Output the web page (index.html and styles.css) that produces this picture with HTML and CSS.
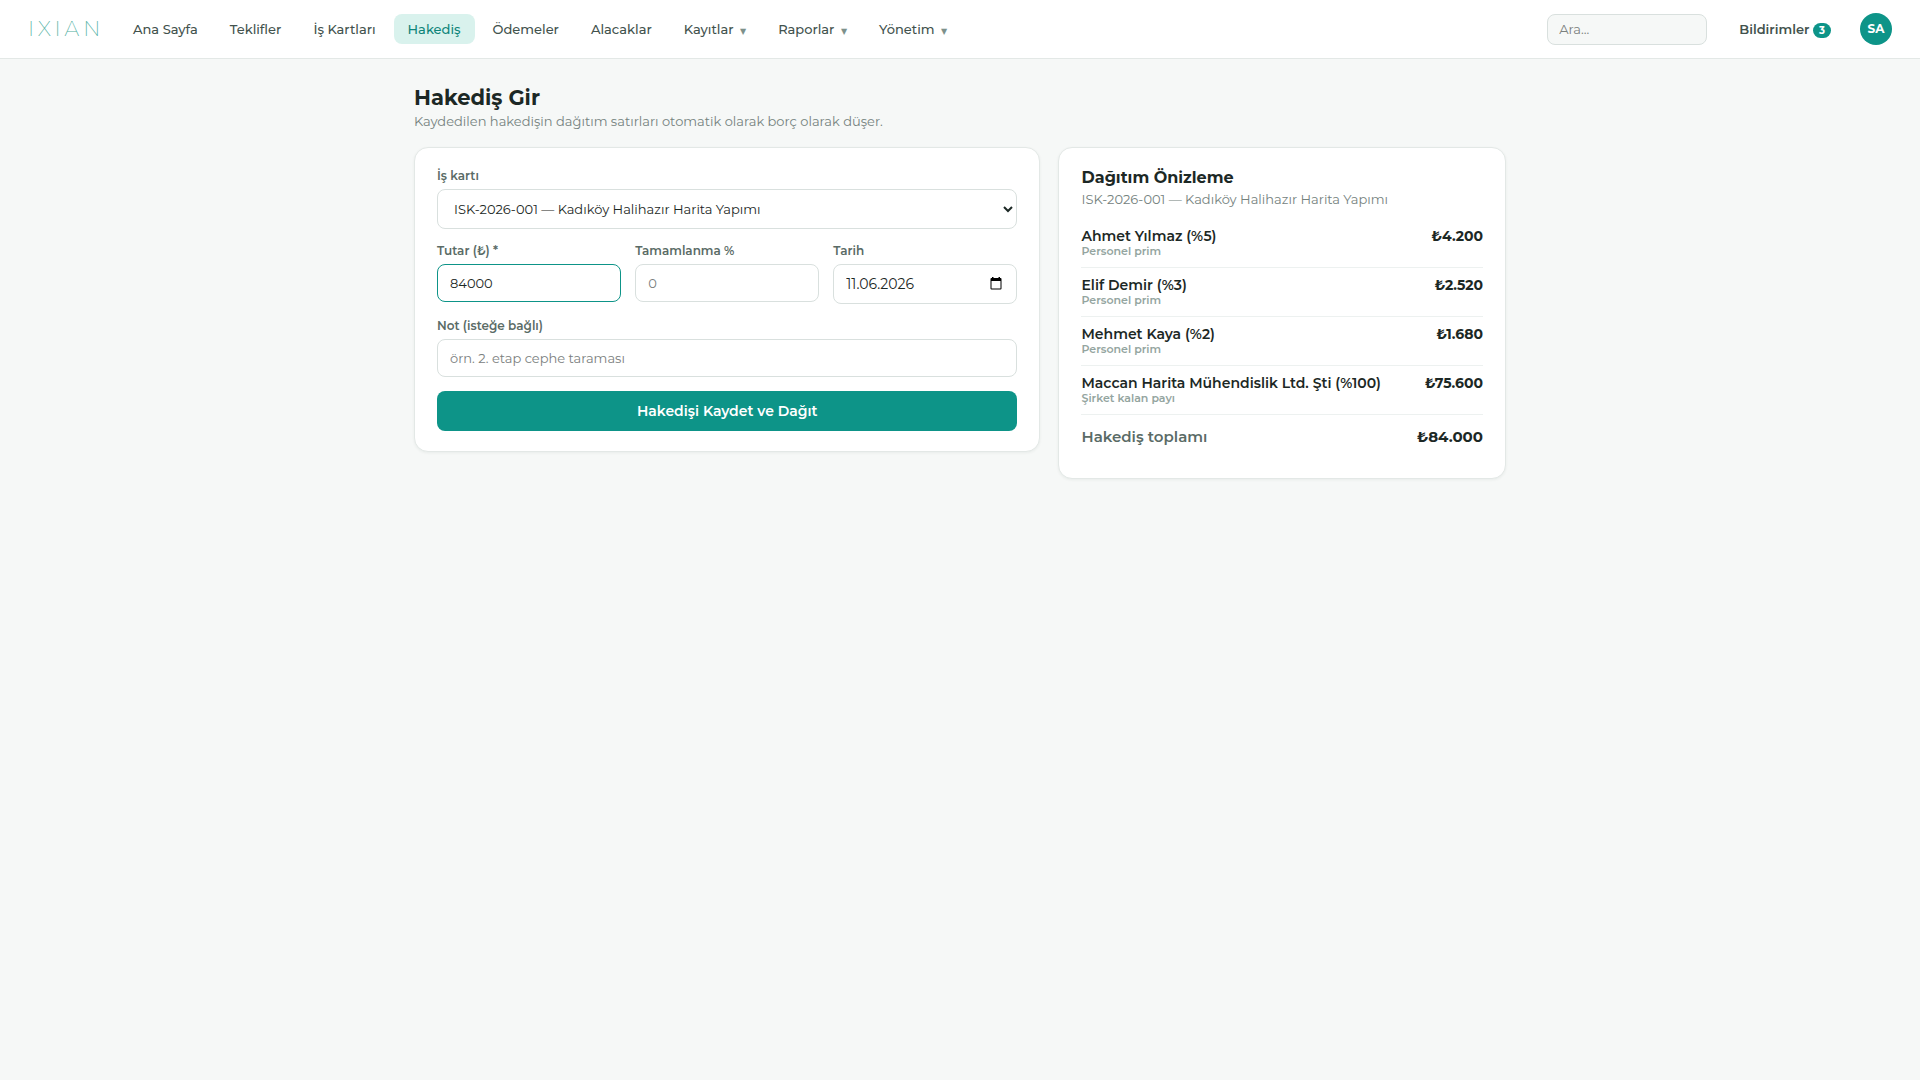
FILE: index.html
```html
<!DOCTYPE html>
<html lang="tr">
<head>
  <meta charset="UTF-8">
  <meta name="viewport" content="width=device-width, initial-scale=1.0">
  <title>Hakediş Gir</title>
  <link rel="stylesheet" href="styles.css">
</head>
<body>
  <header class="topbar">
    <a class="logo" href="#">IXIAN</a>
    <nav class="nav">
      <a href="#">Ana Sayfa</a>
      <a href="#">Teklifler</a>
      <a href="#">İş Kartları</a>
      <a href="#" class="active">Hakediş</a>
      <a href="#">Ödemeler</a>
      <a href="#">Alacaklar</a>
      <button type="button">Kayıtlar <span class="caret">▼</span></button>
      <button type="button">Raporlar <span class="caret">▼</span></button>
      <button type="button">Yönetim <span class="caret">▼</span></button>
    </nav>
    <input class="search" type="search" placeholder="Ara..." aria-label="Ara">
    <a class="notify" href="#">Bildirimler <span class="badge">3</span></a>
    <button class="avatar" type="button">SA</button>
  </header>

  <main class="page">
    <h1>Hakediş Gir</h1>
    <p class="muted">Kaydedilen hakedişin dağıtım satırları otomatik olarak borç olarak düşer.</p>

    <div class="columns">
      <form class="card form">
        <div class="field">
          <label for="is-karti">İş kartı</label>
          <div class="control">
            <select id="is-karti">
              <option>ISK-2026-001 — Kadıköy Halihazır Harita Yapımı</option>
            </select>
            <svg class="chevron" viewBox="0 0 10 7" aria-hidden="true"><path d="M1 1l4 4 4-4"/></svg>
          </div>
        </div>
        <div class="row3">
          <div class="field">
            <label for="tutar">Tutar (₺) *</label>
            <input class="focused" id="tutar" type="text" inputmode="numeric" value="84000">
          </div>
          <div class="field">
            <label for="tamamlanma">Tamamlanma %</label>
            <input id="tamamlanma" type="text" inputmode="numeric" placeholder="0">
          </div>
          <div class="field">
            <label for="tarih">Tarih</label>
            <div class="control">
              <input class="date" id="tarih" type="text" value="11.06.2026">
              <button class="calendar" type="button" aria-label="Tarih seç">
                <svg viewBox="0 0 12 13" aria-hidden="true"><path d="M2 0h1.500v1h5V0H10v1h.5Q11.500 1 11.500 2v9.500q0 1-1 1h-9q-1 0-1-1V2Q.5 1 1.500 1H2zM1.500 4v7.500h9V4z" fill-rule="evenodd"/></svg>
              </button>
            </div>
          </div>
        </div>
        <div class="field">
          <label for="not">Not (isteğe bağlı)</label>
          <input id="not" type="text" placeholder="örn. 2. etap cephe taraması">
        </div>
        <button class="submit" type="submit">Hakedişi Kaydet ve Dağıt</button>
      </form>

      <section class="card preview">
        <h2>Dağıtım Önizleme</h2>
        <p class="muted">ISK-2026-001 — Kadıköy Halihazır Harita Yapımı</p>
        <ul class="shares">
          <li>
            <div><strong>Ahmet Yılmaz (%5)</strong><small>Personel prim</small></div>
            <b>₺4.200</b>
          </li>
          <li>
            <div><strong>Elif Demir (%3)</strong><small>Personel prim</small></div>
            <b>₺2.520</b>
          </li>
          <li>
            <div><strong>Mehmet Kaya (%2)</strong><small>Personel prim</small></div>
            <b>₺1.680</b>
          </li>
          <li>
            <div><strong>Maccan Harita Mühendislik Ltd. Şti (%100)</strong><small>Şirket kalan payı</small></div>
            <b>₺75.600</b>
          </li>
        </ul>
        <div class="total"><span>Hakediş toplamı</span><b>₺84.000</b></div>
      </section>
    </div>
  </main>
</body>
</html>
```

FILE: styles.css
```css
* {
  margin: 0;
  padding: 0;
  box-sizing: border-box;
}
body {
  background: #f6f8f7;
  color: #1c2825;
  font-family: Montserrat, Inter, "Noto Sans", sans-serif;
  font-size: 14px;
  line-height: 18px;
}
a {
  color: inherit;
  text-decoration: none;
}
button, input, select {
  font: inherit;
  color: inherit;
}
button {
  border: none;
  background: none;
  cursor: pointer;
}

/* header */
.topbar {
  display: flex;
  align-items: center;
  height: 59px;
  padding: 0 28px;
  background: #fff;
  border-bottom: 1px solid #e3e8e6;
}
.logo {
  width: 91px;
  color: #4fb0a2;
  font-size: 21px;
  font-weight: 200;
  letter-spacing: 4px;
}
.nav {
  display: flex;
  align-items: center;
  gap: 4px;
  margin-right: auto;
}
.nav a, .nav button {
  padding: 6px 14px;
  border-radius: 8px;
  color: #42524d;
  font-size: 13px;
  font-weight: 500;
}
.nav .active {
  background: #d9f2ed;
  color: #0f857a;
}
.caret {
  margin-left: 3px;
  color: #7d918b;
  font-family: "DejaVu Sans", sans-serif;
  font-size: 8px;
  line-height: 8px;
}
.search {
  width: 160px;
  height: 31px;
  padding: 0 11px;
  border: 1px solid #d9e0de;
  border-radius: 8px;
  background: #f6f8f7;
  font-size: 13px;
}
.notify {
  margin: 0 29px 0 32px;
  color: #42524d;
  font-size: 13px;
  font-weight: 600;
}
.badge {
  display: inline-block;
  padding: 0 6px;
  border-radius: 8px;
  background: #0d9488;
  color: #fff;
  font-size: 10px;
  font-weight: 700;
  line-height: 15px;
}
.avatar {
  width: 32px;
  height: 32px;
  border-radius: 50%;
  background: #0d9488;
  color: #fff;
  font-size: 12px;
  font-weight: 700;
}

/* page */
.page {
  max-width: 1140px;
  margin: 0 auto;
  padding: 26px 24px;
}
h1 {
  font-size: 21px;
  font-weight: 700;
  line-height: 26px;
}
h2 {
  margin-bottom: 1px;
  font-size: 16px;
  font-weight: 700;
  line-height: 20px;
}
.muted {
  color: #75827e;
  font-size: 13px;
  line-height: 20px;
}
.columns {
  display: grid;
  grid-template-columns: 1.4fr 1fr;
  align-items: start;
  gap: 18px;
  margin-top: 16px;
}
.card {
  padding: 20px 22px;
  border: 1px solid #e3e8e6;
  border-radius: 14px;
  background: #fff;
  box-shadow: 0 1px 3px rgba(20, 50, 40, 0.06);
}

/* form */
.form {
  display: grid;
  gap: 14px;
}
.row3 {
  display: grid;
  grid-template-columns: repeat(3, 1fr);
  gap: 14px;
}
.field label {
  display: block;
  margin-bottom: 6px;
  color: #5a6b66;
  font-size: 12px;
  font-weight: 600;
  line-height: 15px;
}
.field input, .field select {
  display: block;
  width: 100%;
  height: 38px;
  padding: 0 12px;
  border: 1px solid #d9e0de;
  border-radius: 8px;
  background: #fff;
  font-size: 13px;
}
.field select {
  height: 40px;
  padding: 0 16px;
  appearance: none;
}
.field .date {
  height: 40px;
  font-size: 14px;
}
.field .focused {
  border-color: #0d9488;
}
::placeholder {
  color: #7b807e;
}
.control {
  position: relative;
}
.chevron {
  position: absolute;
  top: 17px;
  right: 4px;
  width: 10px;
  height: 7px;
  fill: none;
  stroke: #1c2825;
  stroke-width: 2;
  pointer-events: none;
}
.calendar {
  position: absolute;
  top: 13px;
  right: 15px;
  width: 12px;
  height: 13px;
}
.calendar svg {
  display: block;
}
.submit {
  height: 40px;
  border-radius: 8px;
  background: #0d9488;
  color: #fff;
  font-weight: 600;
}

/* preview */
.shares {
  margin-top: 10px;
  list-style: none;
}
.shares li {
  display: flex;
  justify-content: space-between;
  padding: 9px 0;
  border-bottom: 1px solid #edf1f0;
  line-height: 17px;
}
.shares strong, .shares small {
  display: block;
}
.shares strong {
  font-weight: 600;
}
.shares small {
  color: #94a5a0;
  font-size: 11px;
  font-weight: 600;
  line-height: 13px;
}
.shares b {
  font-weight: 700;
}
.total {
  display: flex;
  justify-content: space-between;
  padding: 12px 0 11px;
  font-size: 15px;
  line-height: 20px;
}
.total span {
  color: #5a6b66;
  font-weight: 600;
}
```
